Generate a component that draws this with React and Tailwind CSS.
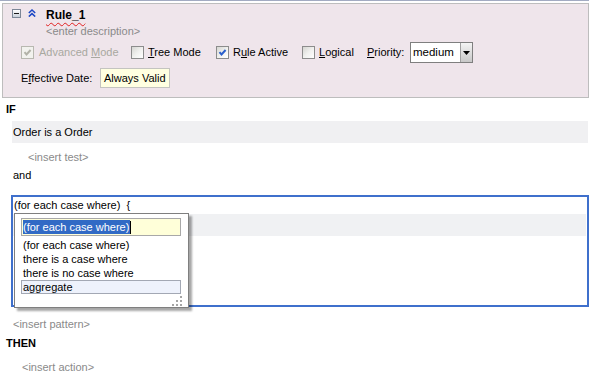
function Checkbox({ checked, disabled }) {
  return (
    <span
      className={
        "relative inline-block w-[13px] h-[13px] shrink-0 border " +
        (disabled ? "border-[#b8b8b0] bg-[#f2f2ee]" : "border-[#8c8c8c] bg-gradient-to-br from-[#d6d6d2] via-[#f0f0ee] to-white")
      }
    >
      {checked && (
        <svg viewBox="0 0 11 11" className="absolute left-0 top-0 w-[11px] h-[11px]">
          <path
            d="M2.5 5.2 L4.5 7.4 L8.6 3"
            fill="none"
            stroke={disabled ? "#b2b2a8" : "#2a5fcc"}
            strokeWidth="2"
          />
        </svg>
      )}
    </span>
  );
}

export default function App() {
  return (
    <div className="w-[592px] h-[378px] bg-white overflow-hidden text-[11px] text-black font-['Liberation_Sans',Arial,sans-serif]">
      <div className="h-px w-[589px] bg-[#a3abc2]" />
      {/* Header panel */}
      <div className="ml-[2px] mt-[2px] w-[587px] h-[95px] border border-[#bdbdbd] bg-[#efe5eb] pt-[3px]">
        <div className="flex items-start h-[16px]">
          <span className="relative ml-[9px] mt-[2px] w-[9px] h-[9px] border border-[#7c8797] bg-gradient-to-b from-white to-[#c9d0da]">
            <span className="absolute left-[1px] top-[3px] w-[5px] h-px bg-[#1a1a1a]" />
          </span>
          <svg viewBox="0 0 8 8" className="ml-[7px] mt-[2px] w-[8px] h-[8px]">
            <path d="M0.8 4 L4 1 L7.2 4" fill="none" stroke="#1c46c4" strokeWidth="1.5" />
            <path d="M0.8 7.6 L4 4.6 L7.2 7.6" fill="none" stroke="#1c46c4" strokeWidth="1.5" />
          </svg>
          <span className="ml-[10px] leading-[16px] text-[12px] font-bold underline decoration-wavy decoration-[#e02020] decoration-1 underline-offset-[3px]">
            Rule_1
          </span>
        </div>
        <div className="pl-[43px] h-[16px] leading-[16px] text-[#8a8a8a]">&lt;enter description&gt;</div>
        <div className="flex items-center h-[21px] mt-[3px] pl-[18px]">
          <div className="flex items-center w-[110px]">
            <Checkbox checked disabled />
            <span className="ml-[5px] text-[#a8a8a0]">
              Advanced <span className="underline">M</span>ode
            </span>
          </div>
          <div className="flex items-center w-[85px]">
            <Checkbox />
            <span className="ml-[4px]">
              <span className="underline">T</span>ree Mode
            </span>
          </div>
          <div className="flex items-center w-[86px]">
            <Checkbox checked />
            <span className="ml-[4px]">
              R<span className="underline">u</span>le Active
            </span>
          </div>
          <div className="flex items-center w-[65px]">
            <Checkbox />
            <span className="ml-[4px]">
              <span className="underline">L</span>ogical
            </span>
          </div>
          <div className="w-[43px]">
            <span className="underline">P</span>riority:
          </div>
          <div className="flex h-[21px] w-[63px] border border-[#7f7f7f] bg-white">
            <span className="flex-1 pl-[2px] leading-[19px] text-[11.5px]">medium</span>
            <span className="flex items-center justify-center w-[12px] h-[19px] border-l border-[#a0a0a0] bg-gradient-to-b from-[#f4f4f4] to-[#c8c8c8]">
              <svg viewBox="0 0 7 4" className="w-[7px] h-[4px]">
                <path d="M0 0 L7 0 L3.5 4 Z" fill="#000" />
              </svg>
            </span>
          </div>
        </div>
        <div className="flex items-center h-[20px] mt-[5px] pl-[18px]">
          <span className="w-[79px] whitespace-nowrap">
            E<span className="underline">f</span>fective Date:
          </span>
          <span className="h-[20px] border border-[#c4c4c0] bg-[#ffffe1] px-[3px] leading-[18px] whitespace-nowrap">
            Always Valid
          </span>
        </div>
      </div>

      {/* Body */}
      <div className="h-[22px] pl-[6px] leading-[22px] font-bold">IF</div>
      <div className="mt-px ml-[12px] w-[576px] h-[22px] bg-[#f0f0f2] pl-[1px] leading-[22px]">Order is a Order</div>
      <div className="mt-[6px] h-[17px] pl-[28px] leading-[17px] text-[#8a8a8a]">&lt;insert test&gt;</div>
      <div className="h-[18px] pl-[13px] leading-[18px]">and</div>

      <div className="relative mt-[11px] ml-[11px] w-[578px] h-[112px] border-2 border-[#3f70cc]">
        <div className="h-[16px] pl-[1px] leading-[16px]">(for each case where)&nbsp;&nbsp;{"{"}</div>
        <div className="mt-px mr-px h-[22px] bg-[#f0f1f3]" />

        {/* Popup */}
        <div className="absolute left-[1px] top-[16px] w-[175px] h-[95px] border border-[#7f7f7f] bg-white shadow-[3px_3px_2px_rgba(0,0,0,0.35)]">
          <div className="ml-[6px] mt-[4px] w-[160px] h-[18px] border border-[#a8a8a8] bg-[#ffffd9] flex items-center pl-[1px]">
            <span className="bg-[#316ac5] text-white leading-[14px] pr-px">(for each case where)</span>
            <span className="w-px h-[13px] bg-black" />
          </div>
          <div className="mt-[2px] ml-[6px] w-[160px]">
            <div className="h-[14px] pl-[2px] leading-[14px]">(for each case where)</div>
            <div className="h-[14px] pl-[2px] leading-[14px]">there is a case where</div>
            <div className="h-[14px] pl-[2px] leading-[14px]">there is no case where</div>
            <div className="h-[14px] border border-[#a3a8b4] bg-[#eef2fc] pl-[1px] leading-[12px]">aggregate</div>
          </div>
          <svg viewBox="0 0 10 10" className="absolute left-[157px] top-[82px] w-[10px] h-[10px]">
            <rect x="8" y="0" width="2" height="2" fill="#a5a5a5" />
            <rect x="4" y="4" width="2" height="2" fill="#a5a5a5" />
            <rect x="8" y="4" width="2" height="2" fill="#a5a5a5" />
            <rect x="0" y="8" width="2" height="2" fill="#a5a5a5" />
            <rect x="4" y="8" width="2" height="2" fill="#a5a5a5" />
            <rect x="8" y="8" width="2" height="2" fill="#a5a5a5" />
          </svg>
        </div>
      </div>

      <div className="mt-[9px] h-[16px] pl-[13px] leading-[16px] text-[#8a8a8a]">&lt;insert pattern&gt;</div>
      <div className="mt-[3px] h-[17px] pl-[6px] leading-[17px] font-bold">THEN</div>
      <div className="mt-[7px] h-[16px] pl-[22px] leading-[16px] text-[#8a8a8a]">&lt;insert action&gt;</div>
    </div>
  );
}
